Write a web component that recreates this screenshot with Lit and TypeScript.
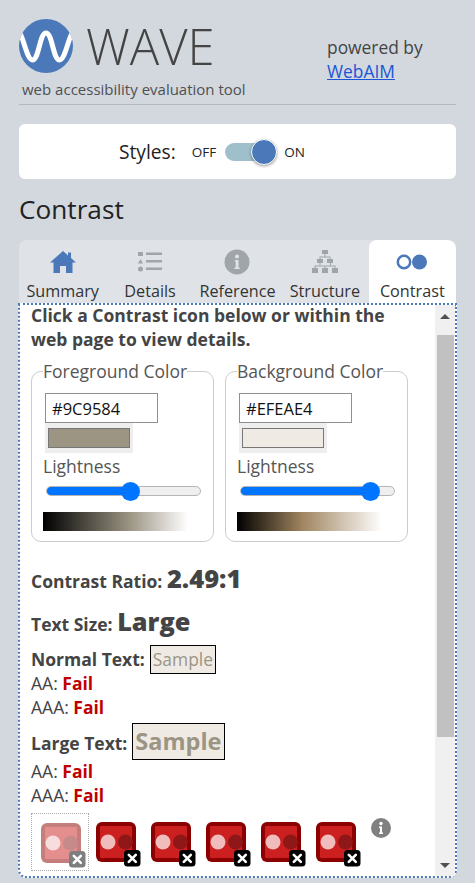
import { LitElement, html, css } from "lit";
import { customElement } from "lit/decorators.js";

@customElement("c-icon")
class CIcon extends LitElement {
  static styles = css`
    :host { display: block; position: relative; width: 40px; height: 40px; }
    svg { display: block; overflow: visible; }
  `;
  render() {
    return html`<svg width="40" height="40" viewBox="0 0 40 40">
      <rect x="0" y="0" width="40" height="40" rx="6" fill="#8b0000"/>
      <rect x="4" y="4" width="32" height="32" rx="1" fill="#cc2020"/>
      <circle cx="12" cy="20" r="7.500" fill="#f0bcbc"/>
      <circle cx="29.500" cy="20" r="7.500" fill="#8f1717"/>
      <rect x="28" y="28" width="16.500" height="16.500" rx="3.500" fill="#000"/>
      <path d="M32.800 32.800l7 7M39.800 32.800l-7 7" stroke="#fff" stroke-width="2.600" stroke-linecap="round" fill="none"/>
    </svg>`;
  }
}

@customElement("app-root")
class AppRoot extends LitElement {
  static styles = css`
    :host { display: block; width: 475px; height: 883px; overflow: hidden; background: #d3d8df; font-family: "Open Sans", sans-serif; color: #444; box-sizing: border-box; padding: 0 19px; }
    * { box-sizing: border-box; }
    .head { display: flex; height: 105px; border-bottom: 1px solid #b3b8bc; padding-top: 19px; }
    .brand { width: 308px; }
    .logo { display: flex; align-items: center; gap: 13px; height: 54px; }
    .wave { font-size: 49px; font-weight: 300; line-height: 54px; color: #444; }
    .tag { font-size: 15px; line-height: 20px; margin: 6px 0 0 3px; color: #505050; }
    .pow { font-size: 17.4px; line-height: 24px; padding-top: 16px; color: #444; }
    .pow a { color: #1a56d6; text-decoration: underline; display: block; }
    .styles { margin-top: 19px; height: 55px; background: #fff; border-radius: 6px; display: flex; align-items: center; color: #222; padding-left: 100px; }
    .styles .lbl { font-size: 19.2px; margin-right: 16px; }
    .styles .s { font-size: 13.5px; }
    .sw { position: relative; width: 46px; height: 18px; background: #9fc0cb; border-radius: 9px; margin: 0 13px 0 9px; }
    .knob { position: absolute; width: 26px; height: 26px; border-radius: 50%; background: #4a78b8; border: 1px solid #fff; right: -6px; top: -4px; box-shadow: 0 1px 3px rgba(0,0,0,.4); }
    h1 { font-size: 26.2px; font-weight: 400; margin: 0; color: #222; line-height: 34px; padding-top: 13px; height: 61px; }
    .tabs { display: grid; grid-template-columns: repeat(5, 1fr); height: 63px; background: #dfe3e8; border-radius: 8px 8px 0 0; overflow: hidden; }
    .tab { display: flex; flex-direction: column; align-items: center; font-size: 16.2px; color: #333; line-height: 20px; }
    .tab.on { background: #fff; border-radius: 8px 8px 0 0; }
    .ico { height: 26px; margin-top: 9px; margin-bottom: 6px; display: flex; align-items: center; justify-content: center; }
    .panel { display: flex; margin-left: -1px; width: 439px; height: 575px; background: #fff; border: 2px dotted #4a78b8; border-radius: 0 0 8px 8px; }
    .content { width: 415px; padding: 0 0 0 11px; flex: none; margin-top: -2px; }
    .intro { font-size: 17.5px; font-weight: 700; line-height: 24px; margin: 0; width: 390px; color: #444; }
    .sets { display: flex; gap: 11.5px; margin-top: 8px; }
    fieldset { margin: 0; width: 182.500px; height: 183px; border: 1px solid #ccc; border-radius: 10px; padding: 0 0 0 11px; min-width: 0; }
    legend { font-size: 17.5px; padding: 0; line-height: 24px; color: #555; }
    .hex { display: block; width: 113px; height: 30px; border: 1px solid #8f8f8f; font: 16.500px "Open Sans", sans-serif; color: #111; padding: 0 0 0 6px; margin: 10px 0 0 2px; background: #fff; outline: none; }
    .swbox { width: 88px; height: 30px; margin-left: 2px; background: #eee; padding: 5px 3px; }
    .swatch { height: 20px; width: 82px; border: 1px solid #777; }
    .lt { font-size: 17.5px; line-height: 24px; margin: 1px 0 0; color: #555; }
    input[type=range] { -webkit-appearance: none; appearance: none; display: block; width: 155px; height: 20px; margin: 3px 0 0 3px; background: transparent; }
    input[type=range]::-webkit-slider-runnable-track { height: 10px; border-radius: 5px; border: 1px solid #b5b5b5; background: var(--t); }
    input[type=range]::-webkit-slider-thumb { -webkit-appearance: none; width: 19px; height: 19px; border-radius: 50%; background: #0075ff; margin-top: -5.500px; }
    .grad { width: 145px; height: 19px; margin: 11px 0 0 0; }
    .row { margin: 0; font-weight: 700; color: #444; font-size: 17.5px; }
    .ratio { margin-top: 18px; line-height: 36px; height: 36px; }
    .ratio b { font-size: 25.500px; }
    .size { margin-top: 4px; line-height: 42px; height: 42px; }
    .size b { font-size: 25.300px; }
    .nt { margin-top: 3px; display: flex; align-items: baseline; height: 29px; gap: 5px; }
    .plain { font-size: 17.5px; line-height: 24px; color: #444; height: 24px; }
    .plain b { color: #c00000; }
    .nt + .plain { margin-top: -3px; }
    .sample { background: #efeae4; color: #9c9584; border: 1px solid #000; }
    .s1 { font-size: 17.4px; font-weight: 400; line-height: 27px; height: 29px; padding: 0 2px; }
    .lt2 { margin-top: 4px; display: flex; align-items: baseline; height: 36px; gap: 5px; }
    .s2 { font-size: 23.500px; font-weight: 700; line-height: 35px; height: 37px; padding: 0 2px; }
    .icons { display: flex; align-items: center; margin-top: 6px; position: relative; }
    .first { width: 58px; height: 58px; border: 1px dotted #aaa; display: flex; padding: 9px; margin-right: 7px; flex: none; }
    .first c-icon { opacity: .5; }
    .icons > c-icon { margin-right: 15px; flex: none; }
    .inf { position: absolute; left: 340px; top: 5px; }
    .bar { width: 20px; background: #f0f0f0; display: flex; flex-direction: column; align-items: center; flex: none; }
    .up, .dn { width: 0; height: 0; border-left: 5px solid transparent; border-right: 5px solid transparent; flex: none; }
    .up { border-bottom: 5px solid #505050; margin: 9px 0 14px; }
    .dn { border-top: 5px solid #505050; margin: 0 0 8px; }
    .thumb { width: 17px; background: #c1c1c1; margin-top: 2px; flex: none; }
    .gap { flex: 1; }
  `;
  render() {
    const gradFg = "linear-gradient(to right,#000,#9c9584 60%,#fff)";
    const gradBg = "linear-gradient(to right,#000,#a08560 45%,#fff)";
    return html`
      <div class="head">
        <div class="brand">
          <div class="logo">
            <svg width="54" height="54" viewBox="0 0 54 54">
              <defs><clipPath id="cc"><circle cx="27" cy="27" r="27"/></clipPath></defs>
              <circle cx="27" cy="27" r="27" fill="#4a78b8"/>
              <path clip-path="url(#cc)" d="M-2 12C4 12 7 41 13.500 41C20 41 20.500 14 27 14C33.500 14 34 41 40.500 41C47 41 50 12 56 12" fill="none" stroke="#fff" stroke-width="5"/>
            </svg>
            <span class="wave">WAVE</span>
          </div>
          <p class="tag">web accessibility evaluation tool</p>
        </div>
        <div class="pow">powered by<a href="#">WebAIM</a></div>
      </div>
      <div class="styles">
        <span class="lbl">Styles:</span><span class="s">OFF</span><span class="sw"><span class="knob"></span></span><span class="s">ON</span>
      </div>
      <h1>Contrast</h1>
      <div class="tabs">
        <div class="tab"><div class="ico"><svg width="26" height="22" viewBox="0 0 26 22"><path d="M13 0L0 11.500h3.500V22h6.500v-7h6v7h6.500V11.500H26L21 7V1.500h-3v3z" fill="#4a78b8"/></svg></div>Summary</div>
        <div class="tab"><div class="ico"><svg width="24" height="20" viewBox="0 0 24 20" fill="#a0a5aa"><rect x="0" y="0" width="5" height="4"/><path d="M2.500 7L5 11.500H0z"/><circle cx="2.500" cy="17" r="2.500"/><rect x="8" y="0.500" width="16" height="2.500"/><rect x="8" y="8" width="16" height="2.500"/><rect x="8" y="15.500" width="16" height="2.500"/></svg></div>Details</div>
        <div class="tab"><div class="ico"><svg width="26" height="26" viewBox="0 0 26 26"><circle cx="13" cy="13" r="12.500" fill="#a0a5aa"/><circle cx="13" cy="7.500" r="2" fill="#dfe3e8"/><path d="M10.800 11h3.700v7.500h1.200V20H10.500v-1.500h1.200V12.500h-.9z" fill="#dfe3e8"/></svg></div>Reference</div>
        <div class="tab"><div class="ico"><svg width="26" height="24" viewBox="0 0 26 24" fill="#a0a5aa"><rect x="10" y="0" width="6" height="4"/><rect x="5" y="9" width="6" height="4"/><rect x="15" y="9" width="6" height="4"/><rect x="0" y="18" width="6" height="5"/><rect x="10" y="18" width="6" height="5"/><rect x="20" y="18" width="6" height="5"/><path d="M12.500 4h1v2.500H18.500V9h-1V7.500h-9V9h-1V6.500h5zM7.500 13h1v2.500H18v-2.500h1v2.500H23.500V18h-1v-1.500H13.500V18h-1v-1.500H3.500V18h-1V15.500h5z"/></svg></div>Structure</div>
        <div class="tab on"><div class="ico"><svg width="32" height="16" viewBox="0 0 32 16"><circle cx="8" cy="8" r="6.200" fill="none" stroke="#4a78b8" stroke-width="2.500"/><circle cx="23.500" cy="8" r="7.500" fill="#4a78b8"/></svg></div>Contrast</div>
      </div>
      <div class="panel">
        <div class="content">
          <p class="intro">Click a Contrast icon below or within the web page to view details.</p>
          <div class="sets">
            <fieldset>
              <legend>Foreground Color</legend>
              <input class="hex" .value=${"#9C9584"} />
              <div class="swbox"><div class="swatch" style="background:#9c9584"></div></div>
              <div class="lt">Lightness</div>
              <input type="range" min="0" max="100" .value=${"55"} style="--t:linear-gradient(to right,#0075ff 55%,#efefef 55%)" />
              <div class="grad" style="background:${gradFg}"></div>
            </fieldset>
            <fieldset>
              <legend>Background Color</legend>
              <input class="hex" .value=${"#EFEAE4"} />
              <div class="swbox"><div class="swatch" style="background:#efeae4"></div></div>
              <div class="lt">Lightness</div>
              <input type="range" min="0" max="100" .value=${"89.500"} step="0.500" style="--t:linear-gradient(to right,#0075ff 85%,#efefef 85%)" />
              <div class="grad" style="background:${gradBg}"></div>
            </fieldset>
          </div>
          <div class="row ratio">Contrast Ratio: <b>2.49:1</b></div>
          <div class="row size">Text Size: <b>Large</b></div>
          <div class="row nt">Normal Text: <span class="sample s1">Sample</span></div>
          <div class="plain">AA: <b>Fail</b></div>
          <div class="plain">AAA: <b>Fail</b></div>
          <div class="row lt2">Large Text: <span class="sample s2">Sample</span></div>
          <div class="plain">AA: <b>Fail</b></div>
          <div class="plain">AAA: <b>Fail</b></div>
          <div class="icons">
            <div class="first"><c-icon></c-icon></div>
            <c-icon></c-icon><c-icon></c-icon><c-icon></c-icon><c-icon></c-icon><c-icon></c-icon>
            <svg class="inf" width="20" height="20" viewBox="0 0 20 20"><circle cx="10" cy="10" r="10" fill="#808080"/><circle cx="10" cy="5.500" r="1.700" fill="#fff"/><path d="M8 8.500h3v6h1V16H8v-1.500h1V10H8z" fill="#fff"/></svg>
          </div>
        </div>
        <div class="bar"><span class="up"></span><div class="thumb" style="height:402px"></div><div class="gap"></div><span class="dn"></span></div>
      </div>
    `;
  }
}
